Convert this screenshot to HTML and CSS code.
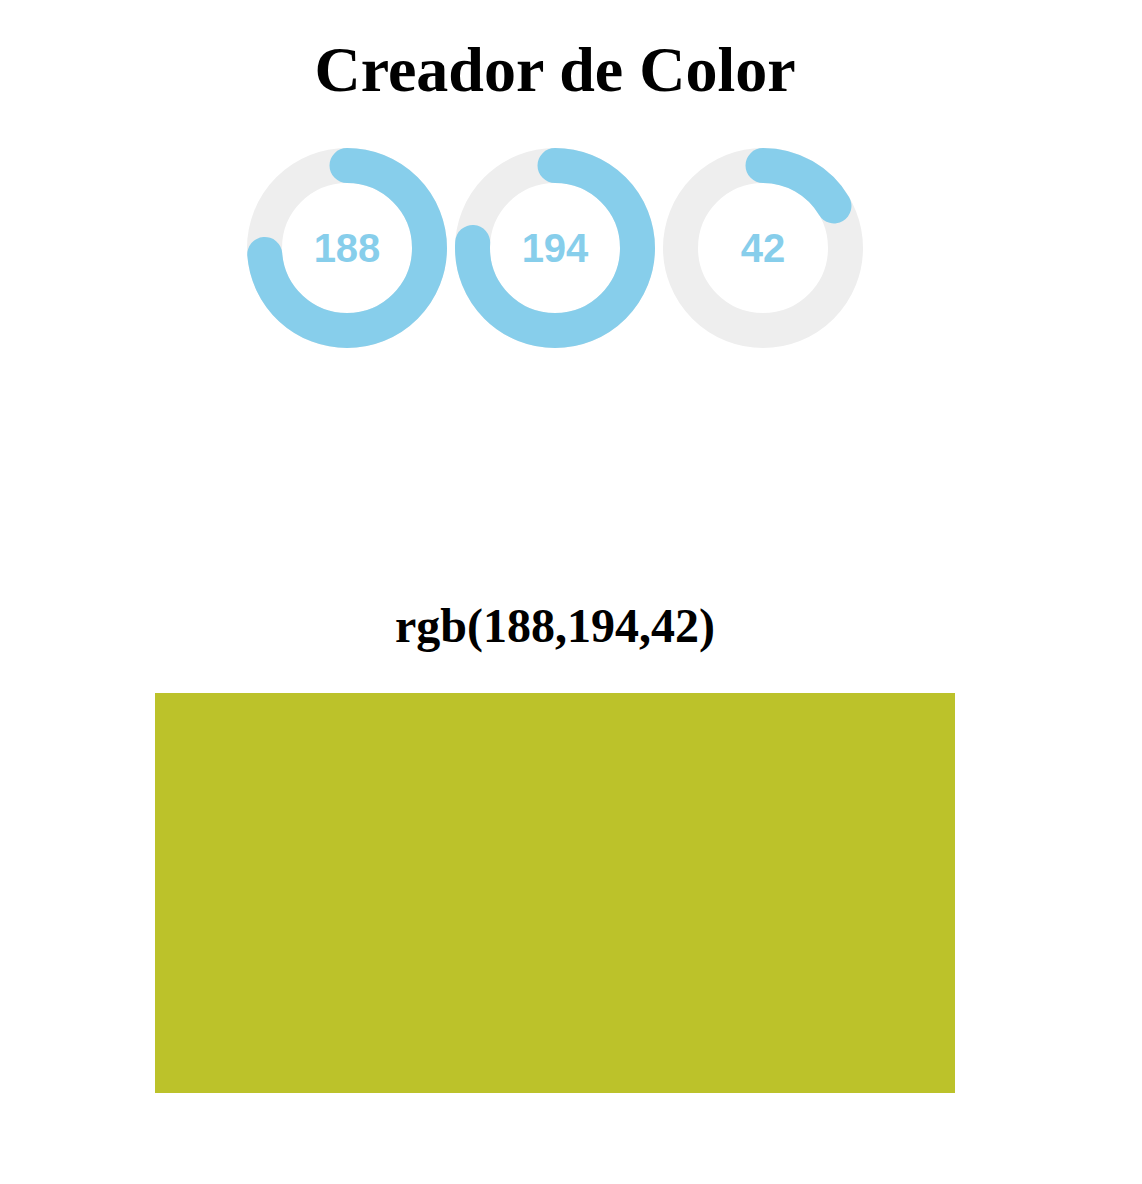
FILE: index.html
```html
<!DOCTYPE html>
<html lang="es">
<head>
<meta charset="utf-8">
<title>Creador de Color</title>
<link rel="stylesheet" href="styles.css">
</head>
<body>
<main class="page">
  <h1 class="title">Creador de Color</h1>
  <div class="knobs">
    <div class="knob">
      <svg class="dial" width="200" height="200" viewBox="0 0 200 200">
        <circle class="track" cx="100" cy="100" r="82.5"/>
        <circle class="value" cx="100" cy="100" r="82.5" pathLength="255" stroke-dasharray="188 300" transform="rotate(-90 100 100)"/>
      </svg>
      <span class="knob-num">188</span>
    </div>
    <div class="knob">
      <svg class="dial" width="200" height="200" viewBox="0 0 200 200">
        <circle class="track" cx="100" cy="100" r="82.5"/>
        <circle class="value" cx="100" cy="100" r="82.5" pathLength="255" stroke-dasharray="194 300" transform="rotate(-90 100 100)"/>
      </svg>
      <span class="knob-num">194</span>
    </div>
    <div class="knob">
      <svg class="dial" width="200" height="200" viewBox="0 0 200 200">
        <circle class="track" cx="100" cy="100" r="82.5"/>
        <circle class="value" cx="100" cy="100" r="82.5" pathLength="255" stroke-dasharray="42 300" transform="rotate(-90 100 100)"/>
      </svg>
      <span class="knob-num">42</span>
    </div>
  </div>
  <h2 class="rgb">rgb(188,194,42)</h2>
  <div class="swatch" style="background-color: rgb(188,194,42);"></div>
</main>
</body>
</html>
```
FILE: styles.css
```css
html, body {
  margin: 0;
  padding: 0;
  background: #ffffff;
}

body {
  font-family: "Liberation Serif", "Times New Roman", serif;
  color: #000000;
}

.page {
  width: 1110px;
  display: flex;
  flex-direction: column;
  align-items: center;
}

.title {
  margin: 33px 0 41px;
  font-size: 64px;
  line-height: 74px;
  font-weight: 700;
}

.knobs {
  display: flex;
  gap: 8px;
  height: 200px;
}

.knob {
  display: grid;
  width: 200px;
  height: 200px;
  place-items: center;
}

.dial,
.knob-num {
  grid-area: 1 / 1;
}

.dial {
  display: block;
}

.track {
  fill: none;
  stroke: #eeeeee;
  stroke-width: 35;
}

.value {
  fill: none;
  stroke: #87ceeb;
  stroke-width: 35;
  stroke-linecap: round;
}

.knob-num {
  font-family: "Liberation Sans", Arial, sans-serif;
  font-weight: 700;
  font-size: 40px;
  line-height: 40px;
  color: #87ceeb;
}

.rgb {
  margin: 250px 0 40px;
  font-size: 48px;
  line-height: 55px;
  font-weight: 700;
}

.swatch {
  width: 800px;
  height: 400px;
}
```
